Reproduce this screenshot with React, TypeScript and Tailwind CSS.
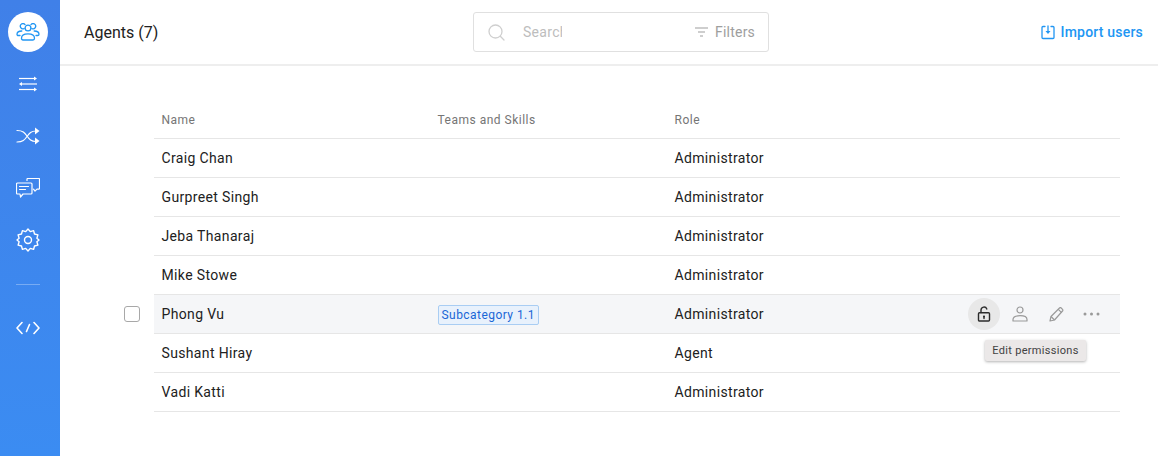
import React from 'react';

const agents = [
  { name: 'Craig Chan', role: 'Administrator' },
  { name: 'Gurpreet Singh', role: 'Administrator' },
  { name: 'Jeba Thanaraj', role: 'Administrator' },
  { name: 'Mike Stowe', role: 'Administrator' },
  { name: 'Phong Vu', role: 'Administrator', active: true },
  { name: 'Sushant Hiray', role: 'Agent' },
  { name: 'Vadi Katti', role: 'Administrator' },
];

const TeamIcon = () => (
  <svg width="24" height="18" viewBox="0 0 24 18" fill="none" stroke="#2196f3" strokeWidth="1.3" strokeLinecap="round" strokeLinejoin="round">
    <circle cx="12" cy="5" r="2.900" />
    <path d="M5.500 15.200c0-2.800 2.700-4.400 6.500-4.400s6.500 1.600 6.500 4.400c0 1-.6 1.800-1.500 1.800H7c-.9 0-1.500-.8-1.500-1.800z" />
    <path d="M8.200 5.500A2.600 2.600 0 1 1 9 1.600" />
    <path d="M15.800 5.500A2.600 2.600 0 1 0 15 1.600" />
    <path d="M4 12.500H2.300c-.8 0-1.300-.5-1.300-1.200 0-2 2-3.300 4.800-3.300" />
    <path d="M20 12.500h1.700c.8 0 1.300-.5 1.300-1.200 0-2-2-3.300-4.800-3.300" />
  </svg>
);

const RoutesIcon = () => (
  <svg width="20" height="18" viewBox="0 0 20 18" fill="none" stroke="#fff" strokeWidth="1.200">
    <path d="M1 3.500h16" />
    <path d="M16 1.500l3 2-3 2z" fill="#fff" stroke="none" />
    <path d="M3 9h16" />
    <path d="M4 7L1 9l3 2z" fill="#fff" stroke="none" />
    <path d="M1 14.500h16" />
    <path d="M16 12.500l3 2-3 2z" fill="#fff" stroke="none" />
  </svg>
);

const ShuffleIcon = () => (
  <svg width="24" height="18" viewBox="0 0 24 18" fill="none" stroke="#fff" strokeWidth="1.200" strokeLinecap="round">
    <path d="M1 3.500c6 0 7.500 2 10 5.500s4 5.500 9 5.500" />
    <path d="M1 15c6 0 7.500-2 10-5.500S15 4 20 4" />
    <path d="M19 .5L23.500 4 19 7.500z" fill="#fff" stroke="none" />
    <path d="M19 10.500L23.500 14 19 17.500z" fill="#fff" stroke="none" />
  </svg>
);

const ChatIcon = () => (
  <svg width="24" height="20" viewBox="0 0 24 20" fill="none" stroke="#fff" strokeWidth="1.200" strokeLinejoin="round" strokeLinecap="round">
    <path d="M1.500 5h13.500c.6 0 1 .4 1 1v9c0 .6-.4 1-1 1H7l-2.500 3-.5-3H1.500c-.6 0-1-.4-1-1V6c0-.6.4-1 1-1z" />
    <path d="M3.500 8.500h9M3.500 11.500h6" />
    <path d="M11 2.500V1.200c0-.4.3-.7.7-.7h11.100c.4 0 .7.300.7.700V10.500c0 .4-.3.700-.7.700H21l-2 2-1.500-2" />
  </svg>
);

const GearIcon = () => (
  <svg width="24" height="24" viewBox="0 0 24 24" fill="none" stroke="#fff" strokeWidth="1.400" strokeLinejoin="round">
    <circle cx="12" cy="12" r="3.500" />
    <path d="M12 1l2.300 2.600 3.300-1 .9 3.400 3.400.9-1 3.300L23 12l-2.100 1.800 1 3.300-3.400.9-.9 3.400-3.300-1L12 23l-2.300-2.600-3.300 1-.9-3.400-3.400-.9 1-3.300L1 12l2.100-1.800-1-3.300 3.400-.9.9-3.400 3.300 1z" />
  </svg>
);

const CodeIcon = () => (
  <svg width="24" height="14" viewBox="0 0 24 14" fill="none" stroke="#fff" strokeWidth="1.600" strokeLinecap="round" strokeLinejoin="round">
    <path d="M6 1.500L1 7l5 5.500" />
    <path d="M18 1.500L23 7l-5 5.500" />
    <path d="M13.500 3.500l-3 7" />
  </svg>
);

const SearchIcon = () => (
  <svg width="17" height="17" viewBox="0 0 17 17" fill="none" stroke="#cfcfcf" strokeWidth="1.300" strokeLinecap="round">
    <circle cx="7.500" cy="7.500" r="6.500" />
    <path d="M12.300 12.300l3.700 3.700" />
  </svg>
);

const FilterIcon = () => (
  <svg width="13" height="10" viewBox="0 0 13 10" fill="none" stroke="#9e9e9e" strokeWidth="1.100">
    <path d="M0 1h13M3 5h7M5 9h3" />
  </svg>
);

const ImportIcon = () => (
  <svg width="14" height="15" viewBox="0 0 14 15" fill="none" stroke="#2196f3" strokeWidth="1.300" strokeLinecap="round" strokeLinejoin="round">
    <path d="M4 1.500H2c-.6 0-1 .4-1 1v10c0 .6.4 1 1 1h10c.6 0 1-.4 1-1v-10c0-.6-.4-1-1-1h-2" />
    <path d="M7 1v6" />
    <path d="M4.500 6L7 9l2.500-3z" fill="#2196f3" stroke="none" />
  </svg>
);

const LockIcon = () => (
  <svg width="14" height="16" viewBox="0 0 14 16" fill="none" stroke="#2b2b2b" strokeWidth="1.400" strokeLinecap="round">
    <rect x="1.500" y="6.700" width="11" height="8.300" rx="1" />
    <path d="M4 6.500V4a3 3 0 0 1 5.800-1" />
    <circle cx="7" cy="10.500" r="1" fill="#2b2b2b" stroke="none" />
    <path d="M7 10.500v2" />
  </svg>
);

const PersonIcon = () => (
  <svg width="16" height="16" viewBox="0 0 16 16" fill="none" stroke="#9a9a9a" strokeWidth="1.200" strokeLinejoin="round">
    <circle cx="8" cy="4" r="3" />
    <path d="M1 15v-1.500C1 11 4 9.700 8 9.700s7 1.300 7 3.800V15z" />
  </svg>
);

const PencilIcon = () => (
  <svg width="15" height="15" viewBox="0 0 15 15" fill="none" stroke="#9a9a9a" strokeWidth="1.200" strokeLinejoin="round">
    <path d="M1 14l1-4.500L10.500 1c.5-.5 1.200-.5 1.700 0l1.300 1.300c.5.500.5 1.200 0 1.700L5.500 13z" />
    <path d="M9.300 2.400l3.300 3.300M2 9.500L5.500 13" />
  </svg>
);

const DotsIcon = () => (
  <svg width="17" height="4" viewBox="0 0 17 4" fill="#9a9a9a">
    <circle cx="2" cy="2" r="1.500" />
    <circle cx="8.500" cy="2" r="1.500" />
    <circle cx="15" cy="2" r="1.500" />
  </svg>
);

export default function App() {
  return (
    <div className="flex h-[456px] w-[1158px] overflow-hidden bg-white font-['Roboto',sans-serif] text-[#212121]">
      {/* Sidebar */}
      <aside className="flex w-[60px] shrink-0 flex-col items-center bg-gradient-to-b from-[#4080e8] to-[#3b8cf2] pr-1 pt-3">
        <div className="flex h-10 w-10 items-center justify-center rounded-full bg-white">
          <TeamIcon />
        </div>
        <div className="mt-[22px] flex h-[20px] items-center"><RoutesIcon /></div>
        <div className="mt-[32px] flex h-[20px] items-center"><ShuffleIcon /></div>
        <div className="mt-[32px] flex h-[20px] items-center"><ChatIcon /></div>
        <div className="mt-[30px] flex h-[24px] items-center"><GearIcon /></div>
        <div className="mt-[32px] h-px w-6 bg-white/30" />
        <div className="mt-[36px] flex h-[14px] items-center"><CodeIcon /></div>
      </aside>

      <main className="flex min-w-0 flex-1 flex-col">
        {/* Header */}
        <header className="relative flex h-[66px] shrink-0 items-center justify-between border-b-2 border-[#eeeeee] pl-6 pr-[15px]">
          <h1 className="pt-px text-base font-normal">Agents (7)</h1>
          <div className="absolute left-[413px] top-3 flex h-10 w-[296px] items-center rounded-[3px] border border-[#e0e0e0] pl-[14px] pr-[13px]">
            <SearchIcon />
            <span className="ml-[18px] w-[39px] overflow-hidden text-sm tracking-[0.3px] text-[#bdbdbd]">Search</span>
            <div className="ml-auto flex items-center gap-[7px] text-sm tracking-[0.2px] text-[#9e9e9e]">
              <FilterIcon />
              <span>Filters</span>
            </div>
          </div>
          <button className="flex items-center gap-[6px] text-sm font-medium tracking-[0.2px] text-[#2196f3]">
            <ImportIcon />
            Import users
          </button>
        </header>

        {/* Table */}
        <div className="pl-[94px] pr-[38px] pt-[34px]">
          <div className="flex h-[39px] items-center border-b border-[#e6e6e6] pl-[7.5px] pt-0.5 text-xs font-normal tracking-[0.5px] text-[#757575]">
            <div className="w-[276px]">Name</div>
            <div className="w-[237px]">Teams and Skills</div>
            <div>Role</div>
          </div>
          {agents.map((agent) => (
            <div
              key={agent.name}
              className={`relative flex h-[39px] items-center border-b border-[#e6e6e6] pl-[7.5px] text-sm tracking-[0.35px] ${agent.active ? 'bg-[#f5f6f8]' : ''}`}
            >
              {agent.active && (
                <span className="absolute -left-[30px] top-[11px] h-4 w-4 rounded-[3px] border border-[#a8a8a8] bg-white" />
              )}
              <div className="w-[276px]">{agent.name}</div>
              <div className="w-[237px]">
                {agent.active && (
                  <span className="inline-flex h-5 items-center rounded-[2px] border border-[#a9cdf3] bg-[#e8f1fc] px-[3px] text-xs font-normal tracking-[0.45px] text-[#1a66d6]">
                    Subcategory 1.1
                  </span>
                )}
              </div>
              <div>{agent.role}</div>
              {agent.active && (
                <>
                  <div className="ml-auto flex items-center pr-[20px]">
                    <div className="flex h-8 w-8 items-center justify-center rounded-full bg-[#e8e8e8]"><LockIcon /></div>
                    <div className="ml-[12px] flex w-4 justify-center"><PersonIcon /></div>
                    <div className="ml-[20px] flex w-4 justify-center"><PencilIcon /></div>
                    <div className="ml-[19px] flex w-[17px] justify-center"><DotsIcon /></div>
                  </div>
                  <div className="absolute left-[831px] top-[45px] z-10 flex h-[21px] w-[101px] items-center justify-center rounded-[2px] bg-[#ebe8e8] text-[11px] tracking-[0.3px] text-[#424242] shadow-[0_1px_3px_rgba(0,0,0,0.3)]">
                    Edit permissions
                  </div>
                </>
              )}
            </div>
          ))}
        </div>
      </main>
    </div>
  );
}
